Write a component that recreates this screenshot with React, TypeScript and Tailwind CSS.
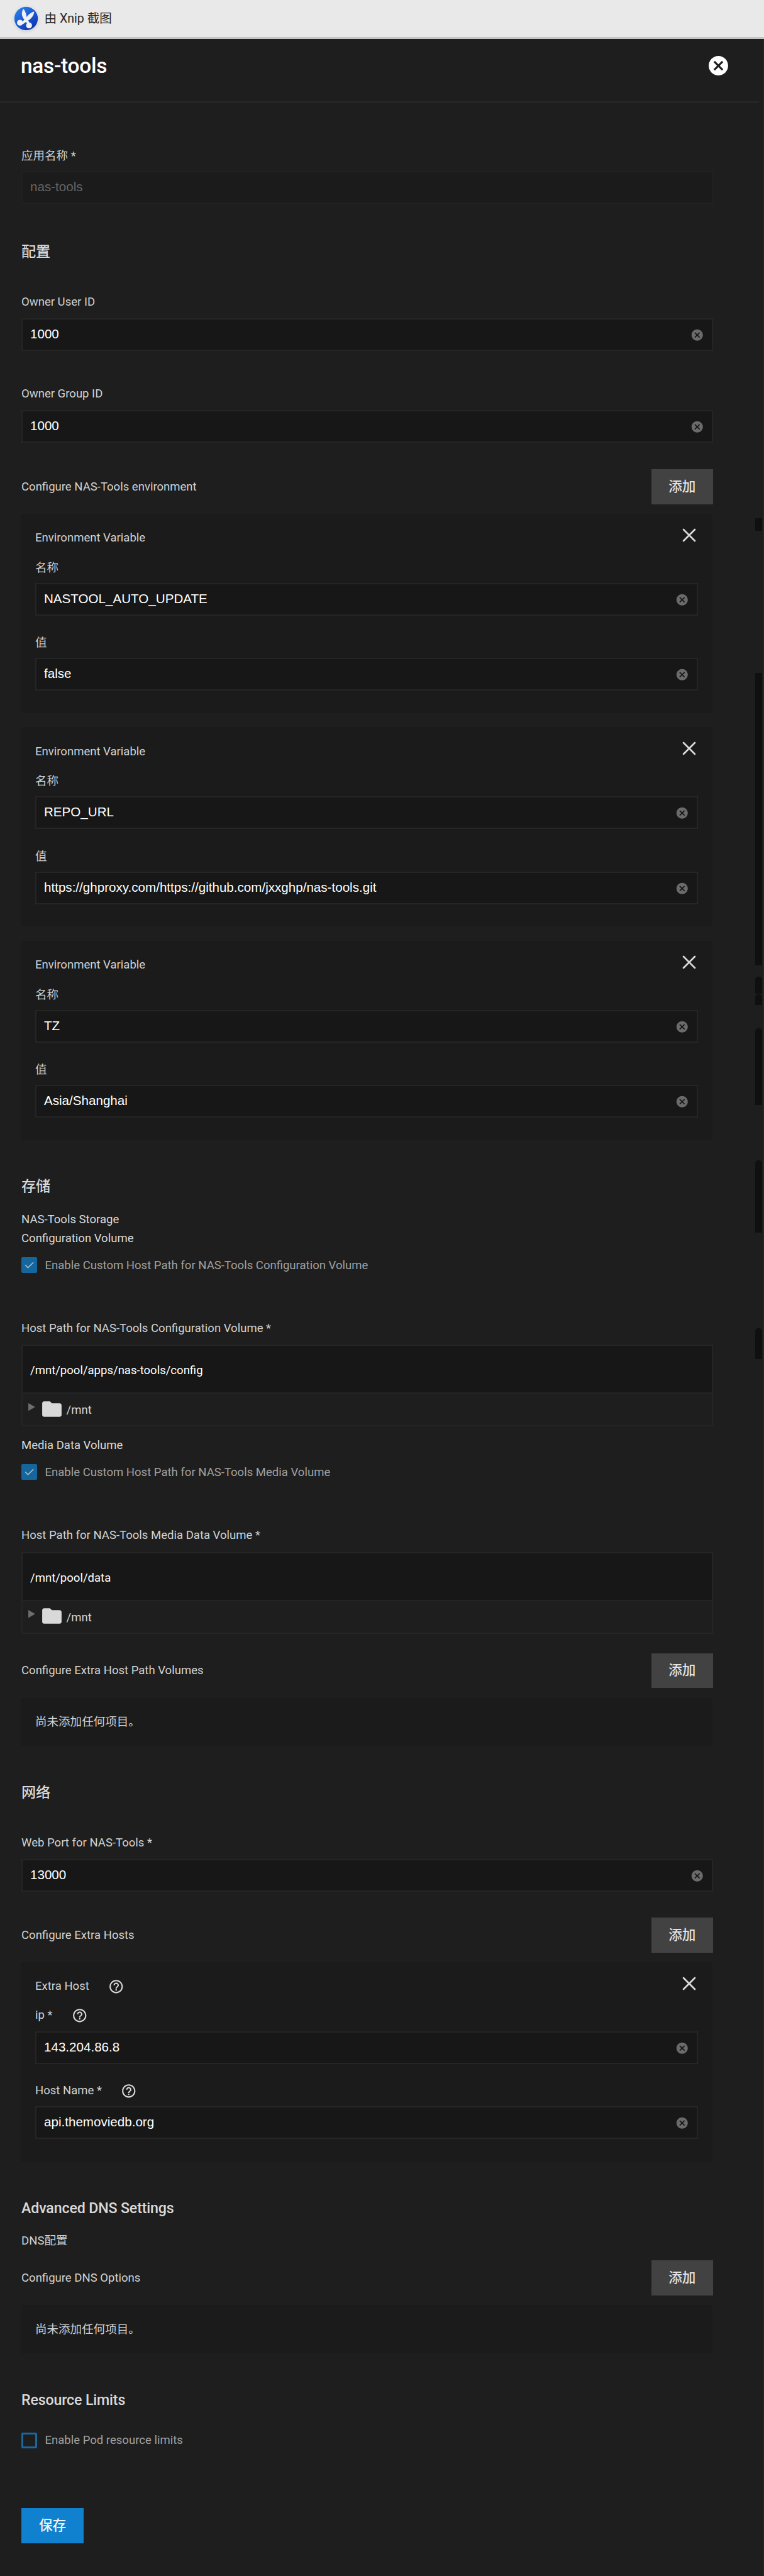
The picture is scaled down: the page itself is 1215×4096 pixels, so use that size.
import type { ReactNode } from 'react';
import { X } from 'lucide-react';
import { MdCancel, MdFolder, MdHelpOutline } from 'react-icons/md';

function XnipLogo() {
  return (
    <svg viewBox="0 0 50 50" className="h-[39px] w-[39px] shrink-0 drop-shadow-sm">
      <defs>
        <linearGradient id="xnip" x1="0" y1="0" x2="0.7" y2="1">
          <stop offset="0" stopColor="#2f86ea" />
          <stop offset="0.55" stopColor="#1a5bd3" />
          <stop offset="1" stopColor="#0f35ae" />
        </linearGradient>
      </defs>
      <circle cx="25" cy="25" r="24.7" fill="#f4f6fa" />
      <circle cx="25" cy="25" r="24" fill="url(#xnip)" />
      <g fill="#f1f1f3">
        <path d="M19.500 5 C14.500 13 16 20 21 27 L28.500 37 L32.500 34.500 L27 25 C25.500 18 24.500 10.500 19.500 5 Z" />
        <path d="M41.500 10.500 C34 13 28 18 24.500 25 L16 32 L18.500 36.500 L27.500 30 C35 26 41 19 41.500 10.500 Z" />
        <circle cx="12.500" cy="33.500" r="6" />
        <circle cx="31" cy="39" r="6" />
      </g>
    </svg>
  );
}

function Label({ children, className = '' }: { children: ReactNode; className?: string }) {
  return <div className={`flex h-6 items-center text-[18.54px] leading-6 text-[#d2d2d2] ${className}`}>{children}</div>;
}

function Help() {
  return <MdHelpOutline className="relative top-px ml-[30px] h-[25.5px] w-[25.5px] text-[#d9d9d9]" />;
}

function Input({ value, className = '' }: { value: string; className?: string }) {
  return (
    <div
      className={`flex h-[52px] items-center justify-between border-2 border-[#252525] bg-[#171717] pr-[12px] pl-[12px] ${className}`}
    >
      <span className="relative -top-px font-['Liberation_Sans',sans-serif] text-[20.6px] leading-6 text-white">{value}</span>
      <MdCancel className="relative top-px h-[21.6px] w-[21.6px] text-[#6b6b6b]" />
    </div>
  );
}

function Heading({ children, className = '' }: { children: ReactNode; className?: string }) {
  return (
    <h3 className={`h-8 text-[23.2px] leading-8 font-medium tracking-[-0.15px] text-[#d9d9d9] ${className}`}>{children}</h3>
  );
}

function AddRow({ label, className = '' }: { label: string; className?: string }) {
  return (
    <div className={`flex h-[55.5px] items-center justify-between ${className}`}>
      <Label>{label}</Label>
      <button className="h-full w-[98.5px] bg-[#424242] text-[21.6px] font-medium text-[#e2e2e2]">添加</button>
    </div>
  );
}

function CardHeader({ children }: { children: ReactNode }) {
  return (
    <div className="flex h-6 items-center justify-between">
      <Label>{children}</Label>
      <X className="relative -top-[4.3px] -mr-[3.500px] h-9 w-9 text-[#dadada]" strokeWidth={1.8} />
    </div>
  );
}

function Card({ children, className = '' }: { children: ReactNode; className?: string }) {
  return (
    <section className={`-ml-[1.5px] h-[317px] w-[1100.5px] bg-[#1b1b1b] pt-[26.5px] pr-[23px] pl-[23.5px] ${className}`}>
      {children}
    </section>
  );
}

function EnvCard({ name, value, className = '' }: { name: string; value: string; className?: string }) {
  return (
    <Card className={className}>
      <CardHeader>Environment Variable</CardHeader>
      <Label className="mt-[23.5px]">名称</Label>
      <Input className="mt-[12px]" value={name} />
      <Label className="mt-[31.5px]">值</Label>
      <Input className="mt-[12px]" value={value} />
    </Card>
  );
}

function EmptyCard() {
  return (
    <section className="mt-[15.5px] -ml-[1.5px] flex h-[77px] w-[1100.5px] items-center bg-[#1b1b1b] pl-[23.5px]">
      <Label>尚未添加任何项目。</Label>
    </section>
  );
}

function Checkbox({ label, checked, className = '' }: { label: string; checked?: boolean; className?: string }) {
  return (
    <div className={`flex h-[25px] items-center gap-[12.5px] ${className}`}>
      {checked ? (
        <span className="h-[25px] w-[25px] rounded-[2px] bg-[#15669d]">
          <svg viewBox="0 0 32 32" className="h-full w-full" fill="none" stroke="#b9c4cb" strokeWidth="2">
            <path d="M8 16 L13.300 21.400 L24.500 10.500" />
          </svg>
        </span>
      ) : (
        <span className="h-[25px] w-[25px] rounded-[2px] border-[3px] border-[#1a689d]" />
      )}
      <span className="text-[18.54px] leading-6 text-[#a0a0a0]">{label}</span>
    </div>
  );
}

function PathPicker({ value, className = '' }: { value: string; className?: string }) {
  return (
    <div className={`h-[130px] border-2 border-[#252525] ${className}`}>
      <div className="flex h-[76px] items-center border-b-2 border-[#252525] bg-[#171717] pt-[4px] pl-[12px]">
        <span className="text-[18.54px] leading-6 text-white">{value}</span>
      </div>
      <div className="flex h-[50px] items-center pl-[9px]">
        <svg viewBox="0 0 14 16" className="relative -top-[4px] h-[12.4px] w-[11px]" fill="#6e6e6e">
          <path d="M0 0 L14 8 L0 16 Z" />
        </svg>
        <MdFolder className="relative -top-px ml-[7.5px] h-[37px] w-[37px] text-[#d9d9d9]" />
        <span className="relative top-px ml-[5px] text-[18.54px] leading-6 text-[#d2d2d2]">/mnt</span>
      </div>
    </div>
  );
}

function ScrollGutter() {
  return (
    <div className="mr-[2px] w-[11px] [&>div]:bg-[#101010]">
      <div className="mt-[660px] h-[20px]" />
      <div className="mt-[226px] h-[465px]" />
      <div className="mt-[17.5px] h-[27.5px] rounded-t-[5px]" />
      <div className="mt-[0.5px] h-[17px] rounded-t-[5px]" />
      <div className="mt-[37px] h-[122px] rounded-t-[5px]" />
      <div className="mt-[88px] h-[115px] rounded-t-[5px]" />
      <div className="mt-[152.5px] h-[49px] rounded-t-[5px]" />
    </div>
  );
}

export default function App() {
  return (
    <div className="flex h-[4096px] w-[1215px] flex-col overflow-hidden bg-[#1e1e1e] font-[Roboto,'Noto_Sans_CJK_SC',sans-serif]">
      <div className="flex h-[62px] shrink-0 items-center gap-[10px] border-b-[3px] border-[#c5c5c5] bg-[#e9e9e9] pl-[21.5px]">
        <XnipLogo />
        <span className="text-[19.6px] leading-6 text-[#262626]">由 Xnip 截图</span>
      </div>

      <div className="flex grow flex-col border-r border-[#2c2c2c]">
        <header className="mr-[7px] flex h-[102px] shrink-0 items-start justify-between border-b-[3px] border-[#262626] pr-[46px] pl-[33px]">
          <h1 className="mt-[23px] text-[33.4px] leading-10 font-medium tracking-[-0.25px] text-white">nas-tools</h1>
          <MdCancel className="mt-[24px] h-[37px] w-[37px] text-white" />
        </header>

        <div className="flex grow justify-between">
          <main className="ml-[34px] w-[1100px]">
            <Label className="mt-[72px]">应用名称 *</Label>
            <div className="mt-3 flex h-[52px] items-center border-2 border-[#212121] bg-[#1b1b1b] pl-[12px]">
              <span className="relative -top-px font-['Liberation_Sans',sans-serif] text-[20.6px] leading-6 text-[#666666]">
                nas-tools
              </span>
            </div>

            <Heading className="mt-[60px]">配置</Heading>
            <Label className="mt-[52px]">Owner User ID</Label>
            <Input className="mt-[14px]" value="1000" />
            <Label className="mt-[56px]">Owner Group ID</Label>
            <Input className="mt-[14px]" value="1000" />

            <AddRow className="mt-[42px]" label="Configure NAS-Tools environment" />
            <EnvCard className="mt-[15px]" name="NASTOOL_AUTO_UPDATE" value="false" />
            <EnvCard className="mt-[22.5px]" name="REPO_URL" value="https://ghproxy.com/https://github.com/jxxghp/nas-tools.git" />
            <EnvCard className="mt-[22.5px]" name="TZ" value="Asia/Shanghai" />

            <Heading className="mt-[57.5px]">存储</Heading>
            <div className="mt-[22px] text-[18.54px] leading-[30px] text-[#d9d9d9]">
              <div>NAS-Tools Storage</div>
              <div>Configuration Volume</div>
            </div>
            <Checkbox className="mt-[15px]" checked label="Enable Custom Host Path for NAS-Tools Configuration Volume" />
            <Label className="mt-[76px]">Host Path for NAS-Tools Configuration Volume *</Label>
            <PathPicker className="mt-[14px]" value="/mnt/pool/apps/nas-tools/config" />

            <div className="mt-[15px] text-[18.54px] leading-[30px] text-[#d9d9d9]">Media Data Volume</div>
            <Checkbox className="mt-[15px]" checked label="Enable Custom Host Path for NAS-Tools Media Volume" />
            <Label className="mt-[76px]">Host Path for NAS-Tools Media Data Volume *</Label>
            <PathPicker className="mt-[14.5px]" value="/mnt/pool/data" />

            <AddRow className="mt-[31px]" label="Configure Extra Host Path Volumes" />
            <EmptyCard />

            <Heading className="mt-[57.5px]">网络</Heading>
            <Label className="mt-[51.5px]">Web Port for NAS-Tools *</Label>
            <Input className="mt-[14px]" value="13000" />

            <AddRow className="mt-[41.5px]" label="Configure Extra Hosts" />
            <Card className="mt-[15px]">
              <CardHeader>
                Extra Host
                <Help />
              </CardHeader>
              <Label className="mt-[22px]">
                ip *
                <Help />
              </Label>
              <Input className="mt-[13.5px]" value="143.204.86.8" />
              <Label className="mt-[30px]">
                Host Name *
                <Help />
              </Label>
              <Input className="mt-[13.5px]" value="api.themoviedb.org" />
            </Card>

            <Heading className="mt-[58.5px]">Advanced DNS Settings</Heading>
            <Label className="mt-6">DNS配置</Label>
            <AddRow className="mt-[19px]" label="Configure DNS Options" />
            <EmptyCard />

            <Heading className="mt-[58px]">Resource Limits</Heading>
            <Checkbox className="mt-[35.5px]" label="Enable Pod resource limits" />
            <button className="mt-[95.5px] block h-[55.5px] w-[99px] bg-[#0f81cf] text-[21.6px] font-medium text-[#f4f4f4]">
              保存
            </button>
          </main>
          <ScrollGutter />
        </div>
      </div>
    </div>
  );
}
